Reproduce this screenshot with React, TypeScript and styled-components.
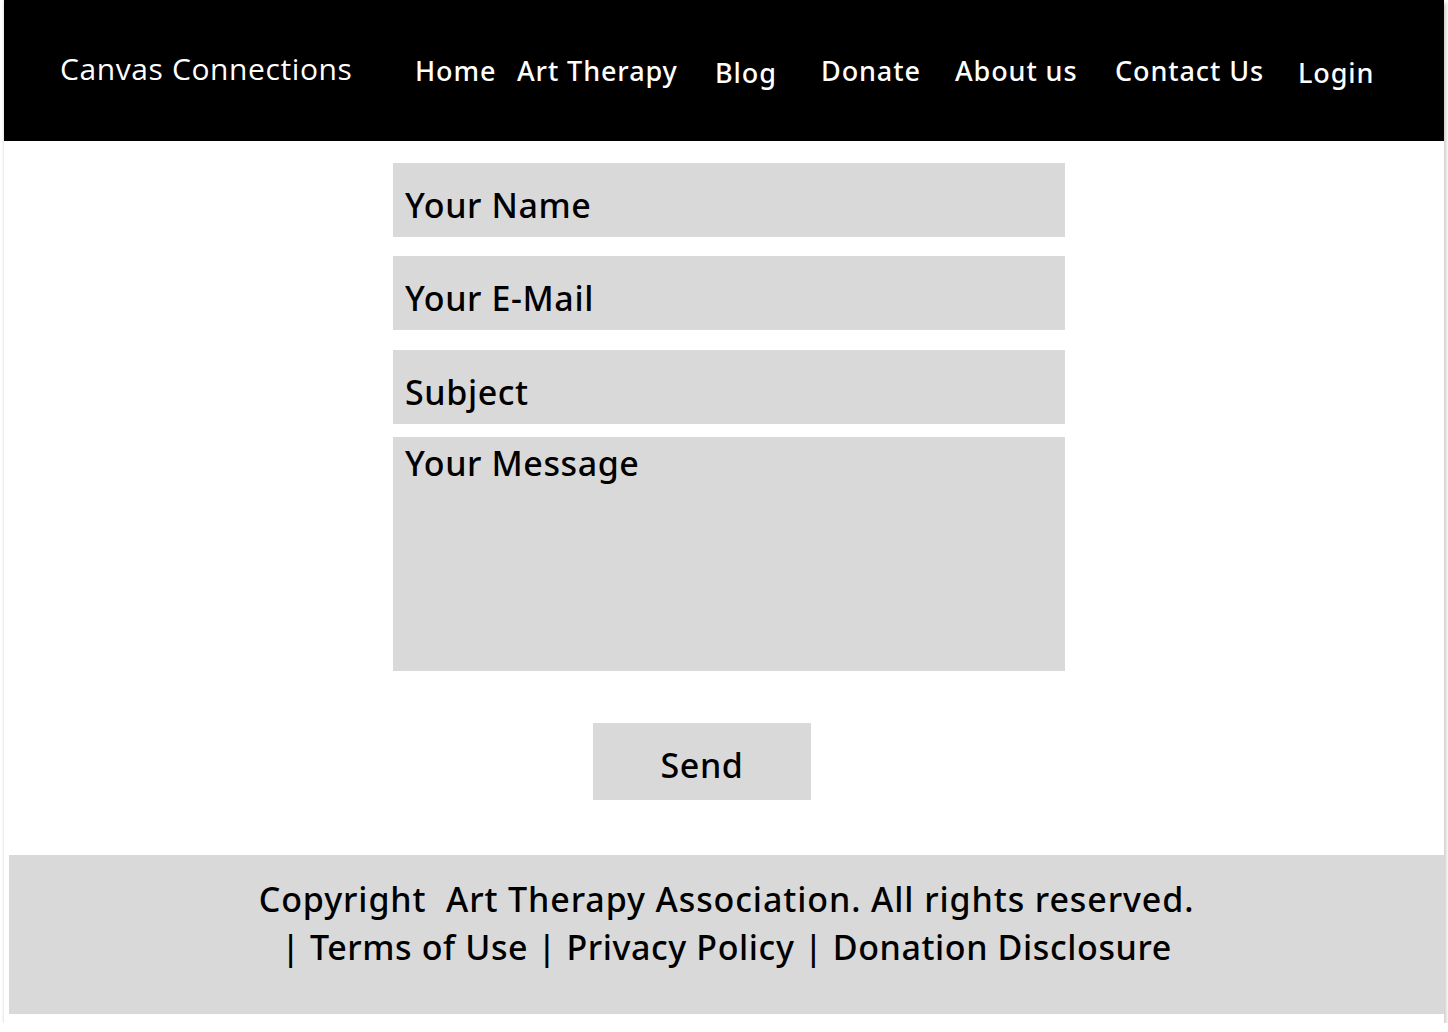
import React from "react";
import styled, { createGlobalStyle } from "styled-components";

const Global = createGlobalStyle`
  html, body { margin: 0; padding: 0; background: #ffffff; }
  body { font-family: "Noto Sans", "Open Sans", sans-serif; }
  * { box-sizing: border-box; }
`;

const Frame = styled.div`
  margin-left: 4px;
  width: 1440px;
  height: 1023px;
  background: #ffffff;
  display: flex;
  flex-direction: column;
  box-shadow: 2px 3px 4px rgba(0, 0, 0, 0.22), -1px 0 2px rgba(0, 0, 0, 0.08);
`;

const Header = styled.header`
  height: 141px;
  background: #000000;
  display: flex;
  align-items: center;
  padding-left: 56px;
`;

const Logo = styled.div`
  font-family: "Open Sans", "Noto Sans", sans-serif;
  font-size: 30px;
  font-weight: 400;
  color: #ffffff;
  width: 355px;
  margin-top: -4px;
  letter-spacing: 0.6px;
`;

const Nav = styled.nav`
  display: grid;
  grid-template-columns: 102px 198px 106px 134px 160px 183px auto;
  align-items: center;
`;

const NavLink = styled.a<{ $drop?: boolean }>`
  font-family: "Noto Sans", sans-serif;
  font-size: 27px;
  font-weight: 500;
  letter-spacing: 0.9px;
  color: #ffffff;
  text-decoration: none;
  white-space: nowrap;
  margin-top: ${(p) => (p.$drop ? "3px" : "-1px")};
`;

const Main = styled.main`
  flex: 1;
  display: flex;
  flex-direction: column;
  padding-top: 22px;
  padding-left: 389px;
`;

const Form = styled.form`
  width: 672px;
  display: flex;
  flex-direction: column;
`;

const Field = styled.input<{ $gap: number }>`
  height: 74px;
  margin-bottom: ${(p) => p.$gap}px;
  border: none;
  outline: none;
  background: #d9d9d9;
  padding: 10px 12px 0;
  font-family: "Noto Sans", sans-serif;
  font-size: 34px;
  font-weight: 500;
  letter-spacing: 0.6px;
  color: #000;
  &::placeholder { color: #000; opacity: 1; }
`;

const Message = styled.textarea`
  height: 234px;
  border: none;
  outline: none;
  resize: none;
  background: #d9d9d9;
  padding: 3px 12px;
  font-family: "Noto Sans", sans-serif;
  font-size: 34px;
  font-weight: 500;
  letter-spacing: 0.6px;
  color: #000;
  &::placeholder { color: #000; opacity: 1; }
`;

const SendButton = styled.button`
  margin-top: 52px;
  margin-left: 200px;
  width: 218px;
  height: 77px;
  border: none;
  background: #d9d9d9;
  padding-top: 8px;
  font-family: "Noto Sans", sans-serif;
  font-size: 34px;
  font-weight: 500;
  letter-spacing: 0.6px;
  color: #000;
  cursor: pointer;
`;

const Footer = styled.footer`
  margin-left: 5px;
  margin-bottom: 9px;
  height: 159px;
  background: #d9d9d9;
  display: flex;
  flex-direction: column;
  align-items: center;
  padding-top: 20px;
`;

const FooterLine = styled.div<{ $spacing: number }>`
  font-family: "Noto Sans", sans-serif;
  font-size: 34px;
  font-weight: 500;
  line-height: 48px;
  letter-spacing: ${(p) => p.$spacing}px;
  color: #000;
  white-space: pre;
`;

export default function App() {
  return (
    <>
      <Global />
      <Frame>
        <Header>
          <Logo>Canvas Connections</Logo>
          <Nav>
            <NavLink href="#">Home</NavLink>
            <NavLink href="#">Art Therapy</NavLink>
            <NavLink href="#" $drop>Blog</NavLink>
            <NavLink href="#">Donate</NavLink>
            <NavLink href="#">About us</NavLink>
            <NavLink href="#">Contact Us</NavLink>
            <NavLink href="#" $drop>Login</NavLink>
          </Nav>
        </Header>
        <Main>
          <Form onSubmit={(e) => e.preventDefault()}>
            <Field $gap={19} placeholder="Your Name" />
            <Field $gap={20} placeholder="Your E-Mail" />
            <Field $gap={13} placeholder="Subject" />
            <Message placeholder="Your Message" />
            <SendButton type="submit">Send</SendButton>
          </Form>
        </Main>
        <Footer>
          <FooterLine $spacing={0.9}>Copyright  Art Therapy Association. All rights reserved.</FooterLine>
          <FooterLine $spacing={0.6}>| Terms of Use | Privacy Policy | Donation Disclosure</FooterLine>
        </Footer>
      </Frame>
    </>
  );
}
